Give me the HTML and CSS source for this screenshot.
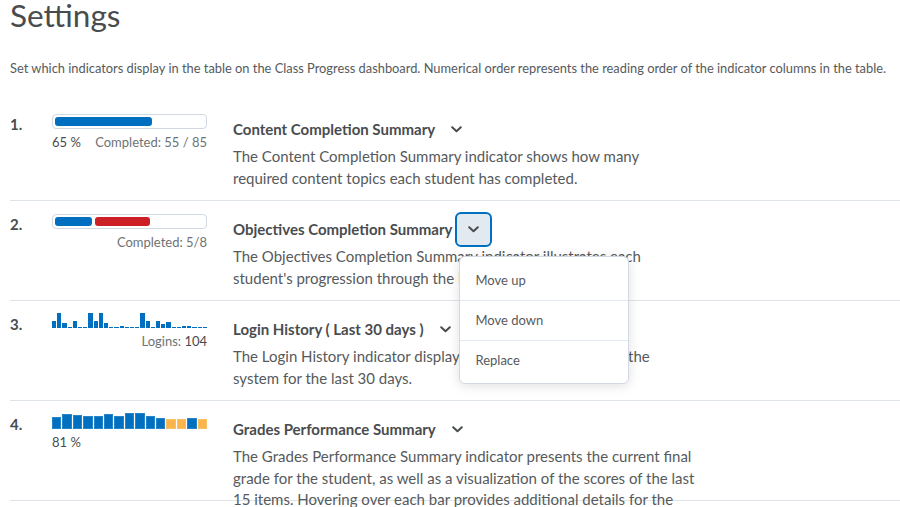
FILE: index.html
```html
<!DOCTYPE html>
<html lang="en">
<head>
<meta charset="utf-8">
<title>Settings</title>
<link rel="stylesheet" href="styles.css">
</head>
<body>
<h1 class="page-title">Settings</h1>
<p class="intro">Set which indicators display in the table on the Class Progress dashboard. Numerical order represents the reading order of the indicator columns in the table.</p>

<ul class="indicators">
  <li class="row">
    <div class="num">1.</div>
    <div class="viz viz-progress">
      <div class="bar-box"><div class="fill fill-blue" style="width:65%"></div></div>
      <div class="viz-label split"><span class="strong">65 %</span><span>Completed: 55 / 85</span></div>
    </div>
    <div class="content">
      <div class="head">
        <span class="title">Content Completion Summary</span>
        <span class="menu-wrap"><button class="chev-btn" aria-label="Options"><svg width="11" height="7" viewBox="0 0 11 7"><path d="M1.2 1.2 L5.5 5.3 L9.8 1.2" fill="none" stroke="#494c4e" stroke-width="2" stroke-linecap="round" stroke-linejoin="round"/></svg></button></span>
      </div>
      <p class="desc">The Content Completion Summary indicator shows how many required content topics each student has completed.</p>
    </div>
  </li>

  <li class="row">
    <div class="num">2.</div>
    <div class="viz viz-progress">
      <div class="bar-box seg"><div class="fill fill-blue" style="width:37px"></div><div class="fill fill-red" style="width:55px"></div></div>
      <div class="viz-label right"><span>Completed: 5/8</span></div>
    </div>
    <div class="content">
      <div class="head">
        <span class="title">Objectives Completion Summary</span>
        <span class="menu-wrap">
          <button class="chev-btn focused" aria-label="Options"><svg width="11" height="7" viewBox="0 0 11 7"><path d="M1.2 1.2 L5.5 5.3 L9.8 1.2" fill="none" stroke="#494c4e" stroke-width="2" stroke-linecap="round" stroke-linejoin="round"/></svg></button>
          <ul class="menu">
            <li>Move up</li>
            <li>Move down</li>
            <li>Replace</li>
          </ul>
        </span>
      </div>
      <p class="desc">The Objectives Completion Summary indicator illustrates each student's progression through the learning objectives.</p>
    </div>
  </li>

  <li class="row">
    <div class="num">3.</div>
    <div class="viz viz-logins">
      <div class="spark">
        <i style="height:7px"></i><i style="height:15px"></i><i style="height:5px"></i><i></i><i style="height:7px"></i><i></i><i></i><i style="height:15px"></i><i style="height:7px"></i><i style="height:15px"></i><i style="height:5px"></i><i></i><i></i><i style="height:2px"></i><i></i><i></i><i></i><i style="height:15px"></i><i style="height:7px"></i><i></i><i style="height:7px"></i><i style="height:4px"></i><i style="height:6px"></i><i></i><i></i><i style="height:2px"></i><i style="height:2px"></i><i></i><i></i><i></i>
      </div>
      <div class="viz-label right"><span>Logins: <span class="strong">104</span></span></div>
    </div>
    <div class="content">
      <div class="head">
        <span class="title">Login History ( Last 30 days )</span>
        <span class="menu-wrap"><button class="chev-btn" aria-label="Options"><svg width="11" height="7" viewBox="0 0 11 7"><path d="M1.2 1.2 L5.5 5.3 L9.8 1.2" fill="none" stroke="#494c4e" stroke-width="2" stroke-linecap="round" stroke-linejoin="round"/></svg></button></span>
      </div>
      <p class="desc">The Login History indicator displays each student's logins to the system for the last 30 days.</p>
    </div>
  </li>

  <li class="row">
    <div class="num">4.</div>
    <div class="viz viz-grades">
      <div class="grades">
        <i style="height:12px"></i><i style="height:15px"></i><i style="height:14px"></i><i style="height:13px"></i><i style="height:13px"></i><i style="height:15px"></i><i style="height:13px"></i><i style="height:16px"></i><i style="height:16px"></i><i style="height:13px"></i><i style="height:11px"></i><i class="low" style="height:10px"></i><i class="low" style="height:10px"></i><i style="height:11px"></i><i class="low" style="height:10px"></i>
      </div>
      <div class="viz-label"><span class="strong">81 %</span></div>
    </div>
    <div class="content">
      <div class="head">
        <span class="title">Grades Performance Summary</span>
        <span class="menu-wrap"><button class="chev-btn" aria-label="Options"><svg width="11" height="7" viewBox="0 0 11 7"><path d="M1.2 1.2 L5.5 5.3 L9.8 1.2" fill="none" stroke="#494c4e" stroke-width="2" stroke-linecap="round" stroke-linejoin="round"/></svg></button></span>
      </div>
      <p class="desc">The Grades Performance Summary indicator presents the current final grade for the student, as well as a visualization of the scores of the last 15 items. Hovering over each bar provides additional details for the item.</p>
    </div>
  </li>
</ul>
</body>
</html>
```

FILE: styles.css
```css
* { box-sizing: border-box; }

html, body {
  margin: 0;
  padding: 0;
  background: #ffffff;
  overflow: hidden;
}

body {
  font-family: Lato, "Open Sans", "Liberation Sans", sans-serif;
  color: #494c4e;
  padding: 0 0 0 10px;
  height: 507px;
}

.page-title {
  margin: 0;
  font-size: 31.5px;
  line-height: 30px;
  font-weight: 400;
  color: #494c4e;
}

.intro {
  margin: 29px 0 0 0;
  font-size: 12.85px;
  line-height: 18px;
  color: #565a5c;
}

.indicators {
  list-style: none;
  margin: 24px 0 0 0;
  padding: 0;
}

.row {
  display: flex;
  align-items: flex-start;
  height: 100px;
  border-bottom: 1px solid #dfe4ea;
}

.num {
  width: 42px;
  flex: none;
  padding-top: 13px;
  font-size: 15px;
  line-height: 20px;
  font-weight: 700;
  color: #494c4e;
}

.viz {
  width: 155px;
  flex: none;
}

.viz-progress { padding-top: 13px; }
.viz-logins { padding-top: 11px; }
.viz-grades { padding-top: 11px; }

.bar-box {
  height: 15px;
  border: 1px solid #d3d9e3;
  border-radius: 4px;
  padding: 2px;
  display: flex;
  gap: 3px;
}

.fill {
  height: 100%;
  border-radius: 3px;
}
.fill-blue { background: #006fbf; }
.fill-red { background: #cd2026; }

.viz-label {
  margin-top: 4px;
  font-size: 13px;
  line-height: 18px;
  color: #6e7376;
  display: flex;
}
.viz-label.split { justify-content: space-between; }
.viz-label.right { justify-content: flex-end; }
.viz-label .strong { color: #494c4e; }

.spark {
  height: 16px;
  display: flex;
  align-items: flex-end;
  gap: 1px;
}
.spark i {
  flex: 1;
  height: 1px;
  background: #006fbf;
}

.grades {
  height: 17px;
  display: flex;
  align-items: flex-end;
  gap: 1px;
}
.grades i {
  flex: 1;
  background: #006fbf;
  box-shadow: inset 0 0 0 1px rgba(255,255,255,0.15);
}
.grades i.low { background: #f9b44c; }

.content {
  margin-left: 26px;
  flex: 1;
}

.head {
  margin-top: 11px;
  height: 34px;
  display: flex;
  align-items: center;
}

.title {
  font-size: 15px;
  font-weight: 700;
  color: #494c4e;
}

.menu-wrap {
  position: relative;
  margin-left: 3px;
  display: flex;
}

.chev-btn {
  width: 37px;
  height: 35px;
  border: 2px solid transparent;
  border-radius: 6px;
  background: transparent;
  padding: 0;
  display: flex;
  align-items: center;
  justify-content: center;
  cursor: pointer;
}
.chev-btn.focused {
  border-color: #006fbf;
  background: #e3e9f1;
}

.menu {
  position: absolute;
  top: calc(100% + 9px);
  left: 4px;
  width: 170px;
  margin: 0;
  padding: 3px 0;
  list-style: none;
  background: #ffffff;
  border: 1px solid #d3d9e3;
  border-radius: 6px;
  box-shadow: 0 2px 12px rgba(0, 0, 0, 0.12);
  z-index: 10;
}
.menu li {
  height: 40px;
  padding-left: 15px;
  display: flex;
  align-items: center;
  font-size: 13px;
  color: #565a5c;
  border-top: 1px solid #e3e9f1;
}
.menu li:first-child { border-top: none; }

.desc {
  margin: 0;
  width: 463px;
  font-size: 15px;
  line-height: 21.5px;
  color: #565a5c;
}
```
